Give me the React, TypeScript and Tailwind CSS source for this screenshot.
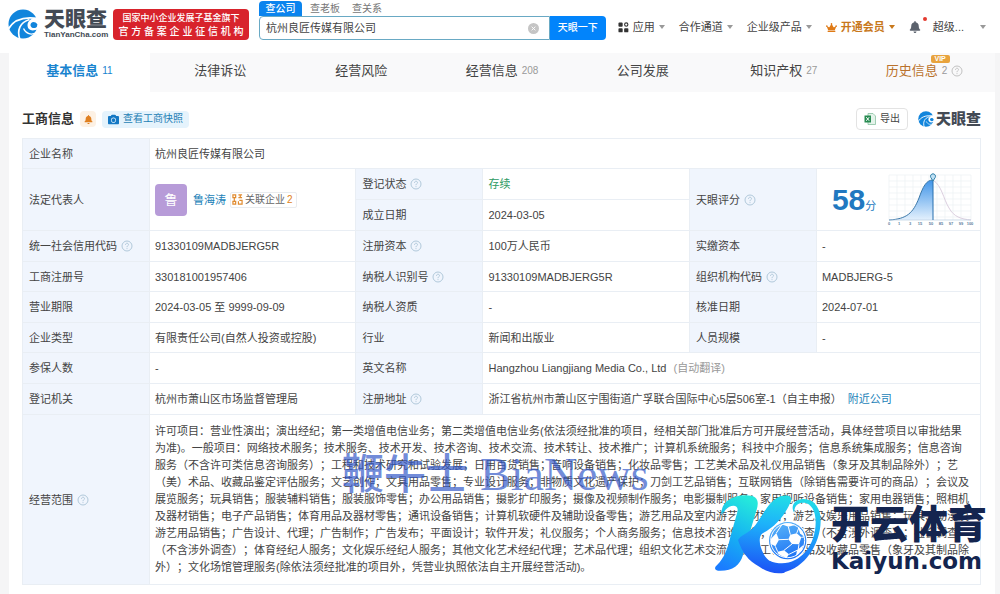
import type { ReactNode } from 'react';
import { FaBell, FaCamera, FaCrown } from 'react-icons/fa';

const scopeLines = [
  '许可项目：营业性演出；演出经纪；第一类增值电信业务；第二类增值电信业务(依法须经批准的项目，经相关部门批准后方可开展经营活动，具体经营项目以审批结果',
  '为准)。一般项目：网络技术服务；技术服务、技术开发、技术咨询、技术交流、技术转让、技术推广；计算机系统服务；科技中介服务；信息系统集成服务；信息咨询',
  '服务（不含许可类信息咨询服务）；工程和技术研究和试验发展；日用百货销售；音响设备销售；化妆品零售；工艺美术品及礼仪用品销售（象牙及其制品除外）；艺',
  '（美）术品、收藏品鉴定评估服务；文艺创作；文具用品零售；专业设计服务；非物质文化遗产保护；刀剑工艺品销售；互联网销售（除销售需要许可的商品）；会议及',
  '展览服务；玩具销售；服装辅料销售；服装服饰零售；办公用品销售；摄影扩印服务；摄像及视频制作服务；电影摄制服务；家用视听设备销售；家用电器销售；照相机',
  '及器材销售；电子产品销售；体育用品及器材零售；通讯设备销售；计算机软硬件及辅助设备零售；游艺用品及室内游艺器材销售；游艺及娱乐用品销售；玩具、动漫及',
  '游艺用品销售；广告设计、代理；广告制作；广告发布；平面设计；软件开发；礼仪服务；个人商务服务；信息技术咨询服务；市场调查（不含涉外调查）；社会调查',
  '（不含涉外调查）；体育经纪人服务；文化娱乐经纪人服务；其他文化艺术经纪代理；艺术品代理；组织文化艺术交流活动；工艺美术品及收藏品零售（象牙及其制品除',
  '外）；文化场馆管理服务(除依法须经批准的项目外，凭营业执照依法自主开展经营活动)。',
];

const tabs = [
  { name: '基本信息', count: '11' },
  { name: '法律诉讼' },
  { name: '经营风险' },
  { name: '经营信息', count: '208' },
  { name: '公司发展' },
  { name: '知识产权', count: '27' },
  { name: '历史信息', count: '2' },
];

function BrandMark({ className }: { className: string }) {
  return (
    <svg viewBox="0 0 30 30" className={className} aria-hidden="true">
      <circle cx="15" cy="15" r="14.500" fill="#1185dc" />
      <path d="M31 8.500C25 8 19.500 11 19.500 16C19.500 21 24 23 30 20L31 14Z" fill="#fff" />
      <path d="M29.300 15.500C27 11.500 22 13 22.500 16.500C23 19.500 27.500 20 29 17.500Z" fill="#1185dc" />
      <path d="M0 20.500C5 11.500 14 7 30 9.500" fill="none" stroke="#fff" strokeWidth="1.700" />
      <path d="M12 31C8.500 21 12 13.500 21.500 10.500" fill="none" stroke="#fff" strokeWidth="1.700" />
      <path d="M15.500 19.500C18 25 23 26.500 29 23.500" fill="none" stroke="#fff" strokeWidth="1.300" />
    </svg>
  );
}

function Caret({ className = 'text-[#999]' }: { className?: string }) {
  return (
    <svg viewBox="0 0 6 4" className={`h-1 w-1.5 shrink-0 ${className}`} aria-hidden="true">
      <path d="M0 0H6L3 4Z" fill="currentColor" />
    </svg>
  );
}

function Help({ className = 'text-[#a9c3d6]' }: { className?: string }) {
  return (
    <svg viewBox="0 0 12 12" className={`inline-block h-3 w-3 shrink-0 ${className}`} fill="none" stroke="currentColor" strokeWidth="0.9" aria-hidden="true">
      <circle cx="6" cy="6" r="5" />
      <path d="M4.500 4.800C4.500 2.700 7.600 2.800 7.500 4.700C7.400 5.800 6 5.800 6 7.200M6 8.200V9.100" />
    </svg>
  );
}

function Label({ children, help, rowSpan }: { children: ReactNode; help?: boolean; rowSpan?: number }) {
  return (
    <th scope="row" rowSpan={rowSpan} className="border border-[#e9eef4] bg-[#f0f5fd] px-1.5 text-left font-normal">
      <span className="flex items-center gap-1 whitespace-nowrap">
        {children}
        {help && <Help />}
      </span>
    </th>
  );
}

function Value({ children, colSpan, rowSpan }: { children: ReactNode; colSpan?: number; rowSpan?: number }) {
  return (
    <td colSpan={colSpan} rowSpan={rowSpan} className="border border-[#e9eef4] px-[5px]">
      {children}
    </td>
  );
}

function ScoreChart() {
  return (
    <svg viewBox="0 0 90 54" className="h-[54px] w-[90px] shrink-0" role="img" aria-label="天眼评分">
      <defs>
        <linearGradient id="score" x1="0" y1="0" x2="0" y2="1">
          <stop offset="0" stopColor="#3f94e8" />
          <stop offset="1" stopColor="#e4f1fd" />
        </linearGradient>
      </defs>
      <path d="M4 2H86M4 8H86M4 14H86M4 20H86M4 26H86M4 32H86M4 38H86M4 44H86M4 2V47M12 2V47M20 2V47M28 2V47M36 2V47M44 2V47M52 2V47M60 2V47M68 2V47M76 2V47M86 2V47" stroke="#edf0f4" strokeWidth="0.7" />
      <path d="M4 47C22 46 28 40 34 25C38 14 41 7 48 7V47Z" fill="url(#score)" />
      <path d="M4 47C22 46 28 40 34 25C38 14 41 7 48 7" fill="none" stroke="#3c78a8" />
      <path d="M48 7C57 13 58 25 64 35C69 44 76 46 86 47" fill="none" stroke="#dccfdf" />
      <path d="M4 47H86" stroke="#b7cde0" strokeWidth="0.7" />
      <path d="M48 6V47" stroke="#276fae" />
      <path d="M48 8L45.800 4.500A2.500 2.500 0 1 1 50.200 4.500Z" fill="#bfe0f4" stroke="#2f7fa8" />
      <g fill="#5d7fa0" fontSize="4" fontWeight="700" textAnchor="middle">
        <text x="4" y="52">0</text>
        <text x="14" y="52">1</text>
        <text x="25" y="52">3</text>
        <text x="35" y="52">15</text>
        <text x="46" y="52">50</text>
        <text x="56" y="52">85</text>
        <text x="66" y="52">97</text>
        <text x="76" y="52">99</text>
        <text x="85" y="52">100</text>
      </g>
    </svg>
  );
}

function SponsorMark() {
  return (
    <svg viewBox="9 18 330 246" className="h-[82px] w-[110px] shrink-0" aria-hidden="true">
      <defs>
        <linearGradient id="stem" x1="0.6" y1="0" x2="0.3" y2="1">
          <stop offset="0" stopColor="#25e8dc" />
          <stop offset="0.5" stopColor="#16b4f2" />
          <stop offset="1" stopColor="#1a7cff" />
        </linearGradient>
        <linearGradient id="arm" gradientUnits="userSpaceOnUse" x1="230" y1="26" x2="200" y2="256">
          <stop offset="0" stopColor="#22dfe6" />
          <stop offset="0.4" stopColor="#1db2fa" />
          <stop offset="1" stopColor="#1c55f6" />
        </linearGradient>
        <linearGradient id="ball" x1="0" y1="0" x2="0.3" y2="1">
          <stop offset="0" stopColor="#5cb8f8" />
          <stop offset="1" stopColor="#2277f5" />
        </linearGradient>
      </defs>
      <path d="M34 84C32 48 62 26 104 25C146 24 147 45 140 68L99 204C89 237 67 253 24 251C12 250 13 240 22 233C42 214 53 186 61 150L82 75C87 56 72 53 58 59C48 64 43 74 34 84Z" fill="url(#stem)" />
      <path d="M84 160C88 145 118 139 137 113C160 82 178 40 211 28C232 21 251 29 242 44C226 84 198 117 158 139C139 152 153 202 178 221C202 236 220 239 224 257C200 263 170 256 148 239C114 222 97 196 84 160Z" fill="url(#arm)" />
      <path d="M178 221C250 252 317 190 317 106C317 65 298 43 272 48C258 52 252 62 253 78C239 56 256 35 281 36C314 37 332 64 332 103C331 171 285 244 218 257C192 259 176 246 165 235Z" fill="url(#arm)" />
      <circle cx="233" cy="161" r="59" fill="#fff" />
      <circle cx="233" cy="161" r="56" fill="url(#ball)" />
      <circle cx="233" cy="161" r="51" fill="none" stroke="#fff" strokeWidth="3" />
      <g fill="#fff">
        <path d="M215 112L235 119L255 114Q236 104 215 112Z" />
        <path d="M183 155L199 138L207 158L196 178L183 171Z" />
        <path d="M241 143L260 139L274 151L267 172L246 171L235 157Z" />
        <path d="M263 118L278 134L283 150L270 139Z" />
        <path d="M203 194L222 190L237 202L231 211Q216 211 203 199Z" />
        <path d="M261 190L280 174L276 190L258 206Z" />
      </g>
      <path d="M235 119L241 143M199 138L215 114M207 158L235 157M274 151L283 150M246 171L222 190M267 172L264 190M196 178L203 194M237 202L261 190M260 139L267 121" stroke="#fff" strokeWidth="3" />
    </svg>
  );
}

export default function App() {
  return (
    <div className="flex min-h-screen flex-col overflow-hidden bg-[#f5f5f6] font-['Liberation_Sans','Noto_Sans_CJK_SC',sans-serif] text-[11px] leading-4 text-[#444]">
      <header className="flex h-[53px] shrink-0 items-start bg-white pr-3.5 pl-2">
        <a href="#" className="mt-2 flex items-center gap-1.5" aria-label="天眼查">
          <BrandMark className="h-8 w-[30px]" />
          <span className="flex w-[64px] flex-col whitespace-nowrap text-[#444b55]">
            <span className="text-[21px] leading-[22px] font-black">天眼查</span>
            <span className="text-[8px] leading-[10px] font-bold">TianYanCha.com</span>
          </span>
        </a>
        <div className="mt-[9px] ml-[5px] flex h-[31px] w-[136px] flex-col justify-center rounded-sm bg-[#d8232c] text-center leading-[14px] font-medium whitespace-nowrap text-white">
          <span className="text-[9px]">国家中小企业发展子基金旗下</span>
          <span className="text-[10px]">官 方 备 案 企 业 征 信 机 构</span>
        </div>
        <form className="ml-2.5 flex min-w-0 flex-1 flex-col" onSubmit={(event) => event.preventDefault()}>
          <div className="flex h-4 items-end text-[10px] text-[#777]">
            <button type="button" className="h-[15px] w-[43px] rounded-t-sm bg-[#0b84ee] font-medium text-white">查公司</button>
            <button type="button" className="ml-2 h-[15px]">查老板</button>
            <button type="button" className="ml-3 h-[15px]">查关系</button>
          </div>
          <div className="flex h-6">
            <div className="flex min-w-0 flex-1 items-center rounded-l-sm border border-[#69a9c4] px-1.5">
              <input aria-label="公司名称" defaultValue="杭州良匠传媒有限公司" className="min-w-0 flex-1 text-[11px] outline-none" />
              <button type="button" aria-label="清除" className="mr-1">
                <svg viewBox="0 0 12 12" className="h-[11px] w-[11px]" aria-hidden="true">
                  <circle cx="6" cy="6" r="6" fill="#c5c5c5" />
                  <path d="M4 4L8 8M8 4L4 8" stroke="#fff" />
                </svg>
              </button>
            </div>
            <button type="submit" className="w-14 shrink-0 rounded-r-sm bg-[#0284fb] text-[10px] font-medium text-white">天眼一下</button>
          </div>
        </form>
        <nav className="mt-[19px] ml-3 flex h-4 shrink-0 items-center whitespace-nowrap">
          <a href="#" className="flex items-center gap-1">
            <svg viewBox="0 0 12 12" className="h-[11px] w-[11px]" fill="#333" aria-hidden="true">
              <rect x="0.500" y="0.500" width="4.600" height="4.600" rx="1" />
              <circle cx="9" cy="2.800" r="1.800" fill="none" stroke="#333" strokeWidth="1.200" />
              <rect x="0.500" y="6.700" width="4.600" height="4.600" rx="1" />
              <rect x="6.700" y="6.700" width="4.600" height="4.600" rx="1" />
            </svg>
            应用<Caret />
          </a>
          <a href="#" className="ml-3.5 flex items-center gap-1">合作通道<Caret /></a>
          <a href="#" className="ml-3.5 flex items-center gap-1">企业级产品<Caret /></a>
          <a href="#" className="ml-3.5 flex items-center gap-1 font-bold text-[#c8781c]">
            <FaCrown className="h-[11px] w-[11px] text-[#df7a16]" />开通会员<Caret className="text-[#c8781c]" />
          </a>
          <button type="button" aria-label="消息" className="relative ml-3.5">
            <FaBell className="h-3 w-3 text-[#5b626d]" />
            <span className="absolute -top-1 -right-1.5 h-1 w-1 rounded-full bg-[#e4392f]" />
          </button>
          <a href="#" className="ml-3 flex items-center gap-4">超级...<Caret /></a>
        </nav>
      </header>

      <div className="mr-[5px] ml-[9px] flex flex-1 flex-col bg-white">
        <nav className="grid h-[39px] shrink-0 grid-cols-7 bg-[#f9f9fa]">
          {tabs.map((tab, index) => (
            <a
              key={tab.name}
              href="#"
              className={`flex items-center justify-center gap-1 pb-1 text-[13px] ${
                index === 0 ? 'bg-white font-bold text-[#1a84cf]' : index === 6 ? 'text-[#b9722c]' : 'text-[#444]'
              }`}
            >
              {index === 6 ? (
                <span className="relative">
                  {tab.name}
                  <span className="absolute -top-2 -right-3 rounded-xs bg-[#e8a33d] px-1 text-[7px] leading-2 font-bold text-white">VIP</span>
                </span>
              ) : (
                tab.name
              )}
              {tab.count && (
                <span className={`text-[10px] font-normal ${index === 0 ? 'text-[#1a84cf]' : 'text-[#999]'}`}>{tab.count}</span>
              )}
              {index === 6 && <Help className="text-[#bbb]" />}
            </a>
          ))}
        </nav>

        <main className="relative pr-3.5 pl-[13px]">
          <div className="flex h-[46px] items-center pt-2">
            <h1 className="text-[13px] font-bold text-[#333]">工商信息</h1>
            <button type="button" aria-label="订阅" className="ml-1.5 flex h-4 w-4 items-center justify-center rounded-sm bg-[#fdf1e4]">
              <FaBell className="h-[9px] w-[9px] text-[#e07f1f]" />
            </button>
            <button type="button" className="ml-1.5 flex h-[17px] items-center gap-1 rounded-sm bg-[#e5f3fc] px-1.5 text-[10px] whitespace-nowrap text-[#1f7fb5]">
              <FaCamera className="h-[11px] w-[11px] text-[#1478c4]" />查看工商快照
            </button>
            <button type="button" className="ml-auto flex h-[22px] items-center gap-1 rounded-sm border border-[#e3e3e3] px-[7px] text-[10px]">
              <svg viewBox="0 0 12 12" className="h-3 w-3" aria-hidden="true">
                <path d="M4 0.500H9L11.500 3V11.500H4Z" fill="#e4f3ea" stroke="#7cba96" strokeWidth="0.700" />
                <path d="M0.500 2.500H7V9.500H0.500Z" fill="#278b51" />
                <path d="M2.300 4.200L5.200 7.800M5.200 4.200L2.300 7.800" stroke="#fff" />
              </svg>
              导出
            </button>
            <span className="ml-2.5 flex items-center gap-0.5 text-[15px] font-black whitespace-nowrap text-[#444b55]">
              <BrandMark className="h-4 w-4" />天眼查
            </span>
          </div>

          <table className="w-full table-fixed border-collapse border border-[#e9eef4]">
            <colgroup>
              <col className="w-[127px]" />
              <col />
              <col className="w-[127px]" />
              <col />
              <col className="w-[127px]" />
              <col className="w-[164px]" />
            </colgroup>
            <tbody>
              <tr className="h-[30px]">
                <Label>企业名称</Label>
                <Value colSpan={5}>杭州良匠传媒有限公司</Value>
              </tr>
              <tr className="h-[31px]">
                <Label rowSpan={2}>法定代表人</Label>
                <Value rowSpan={2}>
                  <div className="flex items-center whitespace-nowrap">
                    <span className="flex h-8 w-8 items-center justify-center rounded-sm bg-[#b79bd8] text-[13px] text-white">鲁</span>
                    <a href="#" className="ml-1.5 text-[#1b7fb8]">鲁海涛</a>
                    <a href="#" className="ml-1 flex h-4 items-center gap-0.5 rounded-xs border border-[#e9ecef] px-px text-[10px] text-[#666]">
                      <svg viewBox="0 0 12 12" className="h-[11px] w-[11px]" fill="none" stroke="#e08a2e" strokeWidth="1.300" aria-hidden="true">
                        <path d="M1 1H4V4H1ZM1 8H4V11H1ZM7 1H11M7 4H11M8 7H11V11H7V8M9 1V4M2.500 4V8" />
                      </svg>
                      关联企业 <span className="pr-0.5 text-[#df7f20]">2</span>
                    </a>
                  </div>
                </Value>
                <Label help>登记状态</Label>
                <Value><span className="text-[#2d9a63]">存续</span></Value>
                <Label rowSpan={2} help>天眼评分</Label>
                <Value rowSpan={2}>
                  <div className="flex items-center justify-between pl-2.5">
                    <span className="flex items-baseline text-[#2178c0]">
                      <strong className="text-[30px] leading-8">58</strong>分
                    </span>
                    <ScoreChart />
                  </div>
                </Value>
              </tr>
              <tr className="h-[31px]">
                <Label>成立日期</Label>
                <Value>2024-03-05</Value>
              </tr>
              <tr className="h-[31px]">
                <Label help>统一社会信用代码</Label>
                <Value>91330109MADBJERG5R</Value>
                <Label help>注册资本</Label>
                <Value>100万人民币</Value>
                <Label>实缴资本</Label>
                <Value>-</Value>
              </tr>
              <tr className="h-[30px]">
                <Label>工商注册号</Label>
                <Value>330181001957406</Value>
                <Label help>纳税人识别号</Label>
                <Value>91330109MADBJERG5R</Value>
                <Label help>组织机构代码</Label>
                <Value>MADBJERG-5</Value>
              </tr>
              <tr className="h-[31px]">
                <Label>营业期限</Label>
                <Value>2024-03-05 至 9999-09-09</Value>
                <Label>纳税人资质</Label>
                <Value>-</Value>
                <Label>核准日期</Label>
                <Value>2024-07-01</Value>
              </tr>
              <tr className="h-[30px]">
                <Label>企业类型</Label>
                <Value>有限责任公司(自然人投资或控股)</Value>
                <Label>行业</Label>
                <Value>新闻和出版业</Value>
                <Label>人员规模</Label>
                <Value>-</Value>
              </tr>
              <tr className="h-[31px]">
                <Label>参保人数</Label>
                <Value>-</Value>
                <Label>英文名称</Label>
                <Value colSpan={3}>Hangzhou Liangjiang Media Co., Ltd <span className="ml-1 text-[#999]">(自动翻译)</span></Value>
              </tr>
              <tr className="h-[31px]">
                <Label>登记机关</Label>
                <Value>杭州市萧山区市场监督管理局</Value>
                <Label help>注册地址</Label>
                <Value colSpan={3}>
                  浙江省杭州市萧山区宁围街道广孚联合国际中心5层506室-1（自主申报）
                  <a href="#" className="ml-1.5 text-[#1b7fb8]">附近公司</a>
                </Value>
              </tr>
              <tr className="h-[170px]">
                <Label help>经营范围</Label>
                <Value colSpan={5}>
                  <p className="leading-[17px] whitespace-pre [text-spacing-trim:space-all]">{scopeLines.join('\n')}</p>
                </Value>
              </tr>
            </tbody>
          </table>

          <div className="pointer-events-none absolute bottom-[86px] left-[333px] flex items-center gap-3 leading-[48px] whitespace-nowrap text-[#3358c8]/70">
            <span className="text-[42px] font-medium">鞭牛士</span>
            <span className="font-['Liberation_Serif',serif] text-[46px]">BiaNews</span>
          </div>

          <div className="pointer-events-none absolute right-2 bottom-2.5 flex items-end gap-2 whitespace-nowrap text-[#14254f]">
            <SponsorMark />
            <div className="flex flex-col">
              <span className="text-[39px] leading-[44px] font-black">开云体育</span>
              <span className="font-['DejaVu_Sans',sans-serif] text-[23px] leading-7 font-bold">Kaiyun.com</span>
            </div>
          </div>
        </main>
      </div>
    </div>
  );
}
